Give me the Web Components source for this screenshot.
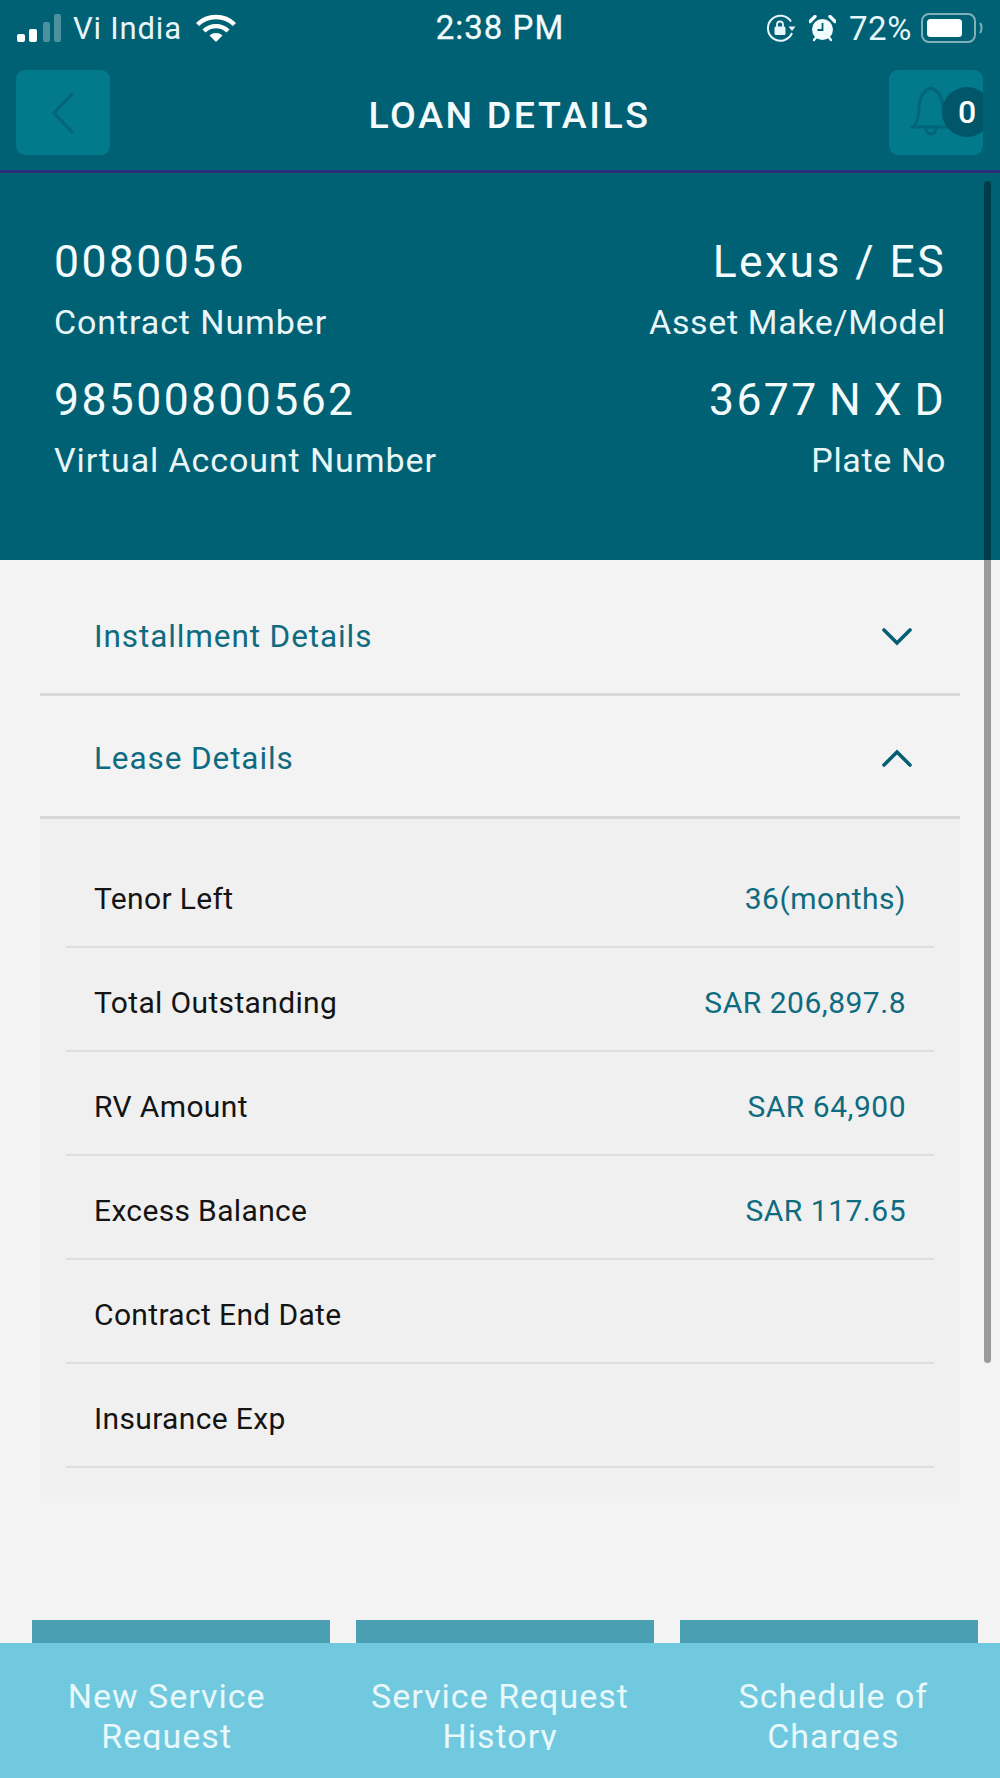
<!DOCTYPE html>
<html>
<head>
<meta charset="utf-8">
<title>Loan Details</title>
<style>
    html, body { margin: 0; padding: 0; background: #f3f3f3; }
    body { font-family: 'Roboto', 'Liberation Sans', sans-serif; }
</style>
</head>
<body>
<loan-app>
    <status-bar></status-bar>
    <app-header title="LOAN DETAILS" count="0"></app-header>
    <loan-summary>
        <summary-item value="0080056" label="Contract Number"></summary-item>
        <summary-item value="Lexus / ES" label="Asset Make/Model" align="right"></summary-item>
        <summary-item value="98500800562" label="Virtual Account Number"></summary-item>
        <summary-item value="3677 N X D" label="Plate No" align="right" tight></summary-item>
    </loan-summary>
    <accordion-row label="Installment Details"></accordion-row>
    <accordion-row label="Lease Details" open>
        <detail-row label="Tenor Left" value="36(months)"></detail-row>
        <detail-row label="Total Outstanding" value="SAR 206,897.8"></detail-row>
        <detail-row label="RV Amount" value="SAR 64,900"></detail-row>
        <detail-row label="Excess Balance" value="SAR 117.65"></detail-row>
        <detail-row label="Contract End Date"></detail-row>
        <detail-row label="Insurance Exp"></detail-row>
    </accordion-row>
    <footer-tabs>
        <footer-tab>New Service<br>Request</footer-tab>
        <footer-tab>Service Request<br>History</footer-tab>
        <footer-tab>Schedule of<br>Charges</footer-tab>
    </footer-tabs>
</loan-app>

<script>
class LoanApp extends HTMLElement {
    constructor() {
        super();
        this.attachShadow({ mode: 'open' });
        this.shadowRoot.innerHTML = `
            <style>
                :host {
                    display: flex;
                    flex-direction: column;
                    position: relative;
                    width: 1000px;
                    height: 1778px;
                    overflow: hidden;
                    background: #f3f3f3;
                }
                .scrollbar {
                    position: absolute;
                    left: 984px;
                    top: 181px;
                    width: 7px;
                    height: 1182px;
                    border-radius: 4px;
                    background: rgba(0,0,0,0.36);
                }
            </style>
            <slot></slot>
            <div class="scrollbar"></div>
        `;
    }
}

class StatusBar extends HTMLElement {
    constructor() {
        super();
        this.attachShadow({ mode: 'open' });
        this.shadowRoot.innerHTML = `
            <style>
                :host {
                    display: grid;
                    grid-template-columns: 1fr auto 1fr;
                    align-items: center;
                    height: 56px;
                    padding: 0 17px;
                    background: #006074;
                    color: #e6f6fa;
                    font-family: 'Roboto', sans-serif;
                    font-size: 31px;
                }
                .left, .right { display: flex; align-items: center; }
                .right { justify-content: flex-end; }
                .carrier { margin: 0 14px 0 12px; letter-spacing: 0.8px; }
                .time { font-size: 33px; letter-spacing: 1px; color: #f2fbfd; -webkit-text-stroke: 0.3px #f2fbfd; margin-top: -2px; }
                .pct { margin: 0 9px 0 13px; font-size: 33px; letter-spacing: 0.6px; }
                svg { display: block; }
            </style>
            <div class="left">
                <svg width="44" height="28" viewBox="0 0 44 28">
                    <rect x="0" y="20" width="8" height="8" rx="2" fill="#fff"/>
                    <rect x="12" y="15" width="8" height="13" rx="2" fill="#fff"/>
                    <rect x="26" y="8" width="7" height="20" rx="2" fill="#fff" opacity="0.3"/>
                    <rect x="37" y="0" width="7" height="28" rx="2" fill="#fff" opacity="0.3"/>
                </svg>
                <span class="carrier">Vi India</span>
                <svg width="40" height="28" viewBox="0 0 40 28" fill="none" stroke="#fff" stroke-width="4.4">
                    <path d="M1.5 10.5C11.5 0.5 28.5 0.5 38.5 10.5"/>
                    <path d="M8 17C14.5 10.5 25.5 10.5 32 17"/>
                    <path d="M20 28L13.5 21.5C17 18.2 23 18.2 26.5 21.5Z" fill="#fff" stroke="none"/>
                </svg>
            </div>
            <span class="time">2:38 PM</span>
            <div class="right">
                <svg width="30" height="28" viewBox="0 0 30 28" fill="none" style="margin-right:13px">
                    <path d="M25 7.5A12.5 12.5 0 1 0 26 19" stroke="#e6f6fa" stroke-width="2"/>
                    <path d="M22.5 12.5H29.5L26 17Z" fill="#e6f6fa"/>
                    <rect x="8.5" y="12.5" width="11" height="8.5" rx="1.5" fill="#e6f6fa"/>
                    <path d="M11 13V10.5A3 3 0 0 1 17 10.5V13" stroke="#e6f6fa" stroke-width="1.8"/>
                </svg>
                <svg width="27" height="27" viewBox="0 0 27 27" fill="none">
                    <circle cx="13.5" cy="14.5" r="10.5" fill="#f2fbfd"/>
                    <path d="M1 6.5L6 1.5M26 6.5L21 1.5" stroke="#f2fbfd" stroke-width="3.4" stroke-linecap="round"/>
                    <path d="M5 25L7 22.5M22 25L20 22.5" stroke="#f2fbfd" stroke-width="2.4" stroke-linecap="round"/>
                    <path d="M13.5 8V15H8.5" stroke="#006074" stroke-width="1.8"/>
                </svg>
                <span class="pct">72%</span>
                <svg width="62" height="30" viewBox="0 0 62 30" fill="none">
                    <rect x="1" y="1" width="53" height="28" rx="7" stroke="#fff" stroke-opacity="0.5" stroke-width="2"/>
                    <rect x="6" y="6" width="35" height="18" rx="3.5" fill="#fff"/>
                    <path d="M59 10C61 12 61 18 59 20" stroke="#fff" stroke-opacity="0.5" stroke-width="2"/>
                </svg>
            </div>
        `;
    }
}

class AppHeader extends HTMLElement {
    constructor() {
        super();
        this.attachShadow({ mode: 'open' });
        this.shadowRoot.innerHTML = `
            <style>
                :host {
                    display: grid;
                    grid-template-columns: 94px 1fr 94px;
                    align-items: center;
                    height: 114px;
                    padding: 0 17px 0 16px;
                    background: #006074;
                    border-bottom: 3px solid #26307a;
                }
                .btn {
                    position: relative;
                    width: 94px;
                    height: 85px;
                    margin-top: -1px;
                    border-radius: 9px;
                    background: #027a8b;
                    overflow: hidden;
                    display: flex;
                    align-items: center;
                    justify-content: center;
                }
                .title {
                    text-align: center;
                    padding: 4px 0 0 20px;
                    color: #f4fbfc;
                    font-family: 'Roboto', sans-serif;
                    font-size: 37.5px;
                    font-weight: 500;
                    letter-spacing: 2.6px;
                }
                .badge {
                    position: absolute;
                    left: 53px;
                    top: 17px;
                    width: 50px;
                    height: 50px;
                    border-radius: 50%;
                    background: #01566a;
                    color: #fff;
                    font-family: 'Roboto', sans-serif;
                    font-size: 32px;
                    font-weight: 500;
                    line-height: 50px;
                    text-align: center;
                }
                .bell { position: absolute; left: 21px; top: 14px; }
                svg { display: block; }
            </style>
            <div class="btn">
                <svg width="24" height="44" viewBox="0 0 24 44" fill="none" stroke="#02657a" stroke-width="3">
                    <path d="M22 2L3 22L22 42"/>
                </svg>
            </div>
            <div class="title">${this.getAttribute('title')}</div>
            <div class="btn">
                <svg class="bell" width="42" height="56" viewBox="0 0 42 56" fill="none" stroke="#02657a" stroke-width="3">
                    <path d="M3 43C8 38 9 32 9 24C9 14 14 6 21 4C28 6 33 14 33 24C33 32 34 38 39 43Z"/>
                    <path d="M16 44C16 52 26 52 26 44"/>
                </svg>
                <div class="badge">${this.getAttribute('count')}</div>
            </div>
        `;
    }
}

class LoanSummary extends HTMLElement {
    constructor() {
        super();
        this.attachShadow({ mode: 'open' });
        this.shadowRoot.innerHTML = `
            <style>
                :host {
                    display: grid;
                    grid-template-columns: 1fr 1fr;
                    row-gap: 26px;
                    height: 387px;
                    box-sizing: border-box;
                    padding: 63px 54px 0 54px;
                    align-content: start;
                    background: #006074;
                    color: #f4fbfc;
                }
            </style>
            <slot></slot>
        `;
    }
}

class SummaryItem extends HTMLElement {
    constructor() {
        super();
        this.attachShadow({ mode: 'open' });
        const right = this.getAttribute('align') === 'right';
        this.shadowRoot.innerHTML = `
            <style>
                :host {
                    display: block;
                    text-align: ${right ? 'right' : 'left'};
                    font-family: 'Roboto', sans-serif;
                }
                .value {
                    font-size: 44.5px;
                    line-height: 52px;
                    letter-spacing: 2.4px;
                    word-spacing: ${this.hasAttribute('tight') ? '-3px' : '0'};
                }
                .label {
                    margin-top: 8px;
                    font-size: 34px;
                    line-height: 52px;
                    letter-spacing: ${right ? '0.65px' : '0.9px'};
                    color: #e9f6f8;
                }
            </style>
            <div class="value">${this.getAttribute('value')}</div>
            <div class="label">${this.getAttribute('label')}</div>
        `;
    }
}

class AccordionRow extends HTMLElement {
    constructor() {
        super();
        this.attachShadow({ mode: 'open' });
        const open = this.hasAttribute('open');
        this.shadowRoot.innerHTML = `
            <style>
                :host { display: block; margin: 0 40px; font-family: 'Roboto', sans-serif; }
                .head {
                    display: flex;
                    align-items: center;
                    justify-content: space-between;
                    height: 116px;
                    padding: 4px 48px 0 54px;
                    border-bottom: 3px solid #d6d8d8;
                    color: #0e6b80;
                    font-size: 31.5px;
                    letter-spacing: 0.9px;
                }
                :host(:first-of-type) .head { height: 113px; padding-top: 20px; }
                .panel {
                    display: ${open ? 'block' : 'none'};
                    padding: 25px 26px 29px;
                    background: #f0f0f0;
                }
                svg { display: block; }
            </style>
            <div class="head">
                <span>${this.getAttribute('label')}</span>
                <svg width="30" height="18" viewBox="0 0 30 18" fill="none" stroke="#045f74" stroke-width="3.6" stroke-linecap="round">
                    <path d="${open ? 'M2 16L15 3L28 16' : 'M2 2L15 15L28 2'}"/>
                </svg>
            </div>
            <div class="panel"><slot></slot></div>
        `;
    }
}

class DetailRow extends HTMLElement {
    constructor() {
        super();
        this.attachShadow({ mode: 'open' });
        const value = this.getAttribute('value') || '';
        this.shadowRoot.innerHTML = `
            <style>
                :host {
                    display: flex;
                    align-items: center;
                    justify-content: space-between;
                    height: 104px;
                    box-sizing: border-box;
                    padding: 6px 28px 0;
                    border-bottom: 2px solid #dedede;
                    font-family: 'Roboto', sans-serif;
                    font-size: 30px;
                    letter-spacing: 0.35px;
                    color: #141414;
                }
                .value { color: #0e6b80; letter-spacing: 0.5px; }
            </style>
            <span>${this.getAttribute('label')}</span>
            <span class="value">${value}</span>
        `;
    }
}

class FooterTabs extends HTMLElement {
    constructor() {
        super();
        this.attachShadow({ mode: 'open' });
        this.shadowRoot.innerHTML = `
            <style>
                :host {
                    display: flex;
                    flex: 1;
                    flex-direction: column;
                    justify-content: flex-end;
                }
                .caps {
                    display: flex;
                    gap: 26px;
                    padding: 0 22px 0 32px;
                }
                .caps div { flex: 1; height: 23px; background: #4a9fb2; }
                .bar {
                    display: grid;
                    grid-template-columns: repeat(3, 1fr);
                    height: 135px;
                    background: #70c9de;
                }
            </style>
            <div class="caps"><div></div><div></div><div></div></div>
            <div class="bar"><slot></slot></div>
        `;
    }
}

class FooterTab extends HTMLElement {
    constructor() {
        super();
        this.attachShadow({ mode: 'open' });
        this.shadowRoot.innerHTML = `
            <style>
                :host {
                    display: block;
                    padding-top: 33px;
                    font-family: 'Roboto', sans-serif;
                    text-align: center;
                }
                .text {
                    height: 74px;
                    overflow: hidden;
                    color: #e8f8fb;
                    font-size: 34px;
                    line-height: 40px;
                    letter-spacing: 1px;
                }
            </style>
            <div class="text"><slot></slot></div>
        `;
    }
}

customElements.define('loan-app', LoanApp);
customElements.define('status-bar', StatusBar);
customElements.define('app-header', AppHeader);
customElements.define('loan-summary', LoanSummary);
customElements.define('summary-item', SummaryItem);
customElements.define('accordion-row', AccordionRow);
customElements.define('detail-row', DetailRow);
customElements.define('footer-tabs', FooterTabs);
customElements.define('footer-tab', FooterTab);
</script>
</body>
</html>
